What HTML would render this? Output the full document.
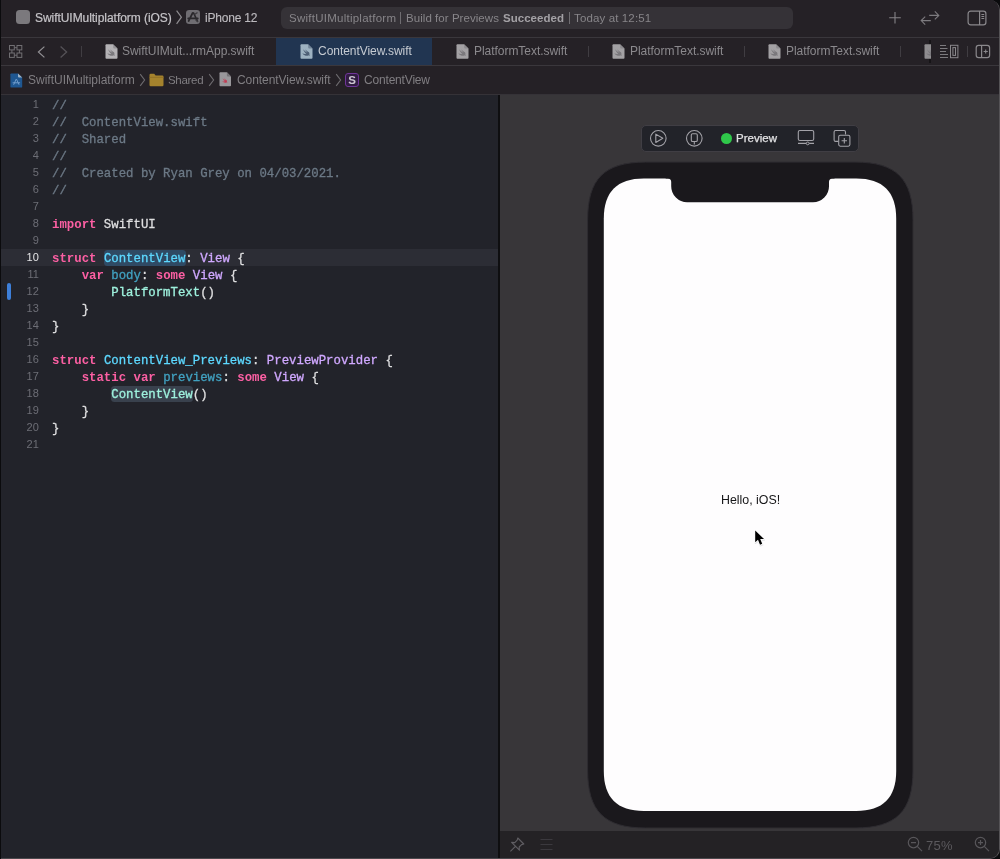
<!DOCTYPE html>
<html>
<head>
<meta charset="utf-8">
<title>Xcode</title>
<style>
html,body{margin:0;padding:0;}
body{width:1000px;height:859px;overflow:hidden;background:#0b0b0d;font-family:"Liberation Sans",sans-serif;position:relative;}
#win{position:absolute;left:1px;top:0;width:999px;height:859px;box-sizing:border-box;background:#252126;border-radius:0 10px 10px 0;border-right:1px solid #555356;border-bottom:1px solid #4b494d;overflow:hidden;}
.abs{position:absolute;}
.t,.cl,.ln{will-change:transform;}
.t{position:absolute;white-space:pre;line-height:16px;height:16px;font-size:12px;}
/* title bar */
#titlebar{position:absolute;left:0;top:0;width:998px;height:37px;background:#252126;}
.hline{position:absolute;left:0;width:998px;height:1px;background:#3a373c;}
#status{position:absolute;left:280px;top:7px;width:512px;height:22px;border-radius:6px;background:#353237;}
/* tabs */
#tabbar{position:absolute;left:0;top:38px;width:998px;height:27px;background:#252126;}
#activetab{position:absolute;left:275px;top:38px;width:156px;height:27px;background:#213551;}
.vdiv{position:absolute;width:1px;top:46px;height:11px;background:#403d42;}
/* breadcrumb */
#crumbs{position:absolute;left:0;top:66px;width:998px;height:28px;background:#252126;}
/* editor */
#editor{position:absolute;left:0;top:95px;width:497px;height:763px;background:#22232a;}
#curline{position:absolute;left:0;top:154px;width:497px;height:17px;background:#2c2d35;}
#divider{position:absolute;left:497px;top:95px;width:2px;height:763px;background:#0e0e10;}
#preview{position:absolute;left:499px;top:95px;width:499px;height:736px;background:#383639;}
#pbar{position:absolute;left:499px;top:831px;width:499px;height:27px;background:#242225;}
.ln{position:absolute;left:0;width:37.8px;margin-top:0px;text-align:right;font-family:"Liberation Sans",sans-serif;font-size:11px;line-height:17px;height:17px;color:#6d6e76;}
.cl{position:absolute;left:51px;margin-top:2px;-webkit-text-stroke:0.3px;white-space:pre;font-family:"Liberation Mono",monospace;font-size:12.35px;line-height:17px;height:17px;color:#dfdfe0;}
#chg{position:absolute;left:6px;top:188px;width:4px;height:17px;border-radius:2px;background:#3d7fd9;}
.ln.cur{color:#e4e4e6}
.hlb{position:absolute;height:15.5px;border-radius:3.5px}
.c{color:#6c7986}.k{color:#fc5fa3;font-weight:bold;-webkit-text-stroke:0}.d{color:#5dd8ff}.o{color:#41a1c0}.p{color:#d0a8ff}.m{color:#9ef1dd}
</style>
</head>
<body>
<div id="win">
  <div id="titlebar"></div>
  <div class="hline" style="top:37px"></div>
  <div id="tabbar"></div>
  <div class="hline" style="top:65px"></div>
  <div id="crumbs"></div>
  <div class="hline" style="top:94px;background:#353237"></div>
  <div id="status"></div>
  <div id="activetab"></div>
  <div class="abs" style="left:15px;top:10px;width:14px;height:14px;border-radius:3.5px;background:#7b797d"></div>
  <div class="t" id="t_title" style="left:34px;top:9.5px;color:#c6c4c8;-webkit-text-stroke:0.2px #c6c4c8;letter-spacing:-0.05px">SwiftUIMultiplatform (iOS)</div>
  <svg class="abs" style="left:174px;top:9px" width="8" height="17" viewBox="0 0 8 17"><path d="M1.6 1.6L6.4 8.2L1.6 14.8" fill="none" stroke="#8e8c90" stroke-width="1.2"/></svg>
  <svg class="abs" style="left:185px;top:10px" width="14" height="14" viewBox="0 0 14 14"><rect x="0" y="0" width="14" height="14" rx="3.2" fill="#6f6d72"/><path d="M2.6 11L6.6 3M7.6 3L11.4 11M2.2 8.4H11.8" stroke="#2a282c" stroke-width="1.7" fill="none" stroke-linecap="round"/><path d="M8.5 4.5L11.5 2.5M9.5 9.5L12 12" stroke="#3c3a3e" stroke-width="1.4" fill="none"/></svg>
  <div class="t" id="t_iphone" style="left:204px;top:9.5px;color:#bcbabe;-webkit-text-stroke:0.15px #bcbabe;letter-spacing:-0.2px">iPhone 12</div>
  <div class="t" id="t_st1" style="left:288px;top:10px;color:#878589;font-size:11.5px;letter-spacing:0.25px">SwiftUIMultiplatform</div>
  <div class="abs" style="left:399px;top:12px;width:1px;height:12px;background:#6f6d71"></div>
  <div class="t" id="t_st2" style="left:405px;top:10px;color:#878589;font-size:11.5px;letter-spacing:0.05px">Build for Previews</div>
  <div class="t" id="t_st3" style="left:502px;top:10px;color:#a3a1a5;font-size:11.5px;font-weight:bold;letter-spacing:0.03px">Succeeded</div>
  <div class="abs" style="left:568px;top:12px;width:1px;height:12px;background:#6f6d71"></div>
  <div class="t" id="t_st4" style="left:573px;top:10px;color:#878589;font-size:11.5px;letter-spacing:0.13px">Today at 12:51</div>
  <svg class="abs" style="left:887px;top:11px" width="14" height="14" viewBox="0 0 14 14"><path d="M7 1V12.6M1.2 6.8H12.8" stroke="#858387" stroke-width="1.1" fill="none"/></svg>
  <svg class="abs" style="left:919px;top:10px" width="21" height="16" viewBox="0 0 21 16"><path d="M9.2 5.4H18.8M14.8 1.4L18.8 5.4L14.8 9.4" stroke="#7d7b7f" stroke-width="1.1" fill="none"/><path d="M10.8 10.6H1.2M5.2 6.6L1.2 10.6L5.2 14.6" stroke="#7d7b7f" stroke-width="1.1" fill="none"/></svg>
  <svg class="abs" style="left:966px;top:10px" width="20" height="16" viewBox="0 0 20 16"><rect x="1.1" y="1.1" width="17.8" height="13.8" rx="2.6" fill="none" stroke="#8a888c" stroke-width="1.2"/><path d="M12.6 1.1V14.9" stroke="#8a888c" stroke-width="1.2"/><path d="M14.4 4.5H17.2M14.4 6.5H17.2M14.4 8.5H17.2" stroke="#8a888c" stroke-width="1"/></svg>
  <svg class="abs" style="left:7px;top:44px" width="15" height="15" viewBox="0 0 15 15"><g fill="none" stroke="#716f73" stroke-width="1"><rect x="1.5" y="1.5" width="4.8" height="4.4"/><rect x="9" y="1.5" width="4.8" height="4.4"/><rect x="1.5" y="9" width="4.8" height="4.4"/><rect x="9" y="9" width="4.8" height="4.4"/><path d="M6.3 3.7H9M6.3 11.2H9M3.9 5.9V9M11.4 5.9V9"/></g></svg>
  <svg class="abs" style="left:35px;top:45px" width="10" height="14" viewBox="0 0 10 14"><path d="M8.4 1.6L2.4 7L8.4 12.4" fill="none" stroke="#939195" stroke-width="1.2"/></svg>
  <svg class="abs" style="left:58px;top:45px" width="10" height="14" viewBox="0 0 10 14"><path d="M1.6 1.6L7.6 7L1.6 12.4" fill="none" stroke="#555257" stroke-width="1.3"/></svg>
  <div class="vdiv" style="left:80px"></div>
  <svg class="abs" style="left:104px;top:44px" width="13" height="15" viewBox="0 0 13 15"><path d="M0.5 1.2Q0.5 0.3 1.4 0.3H8.2L12.5 4.6V13.8Q12.5 14.7 11.6 14.7H1.4Q0.5 14.7 0.5 13.8Z" fill="#b4b2b5"/><path d="M8.2 0.3V3.6Q8.2 4.6 9.2 4.6H12.5Z" fill="#7a787c" opacity="0.55"/><path d="M3 5.2C4.4 6.8 5.8 7.9 7.4 8.8C6.4 7.6 5.6 6.4 5 5.2C6.4 6.6 7.8 7.7 9 8.3C9.6 9.2 9.5 10 9.3 10.5C9.8 11 10 11.6 9.9 12C9.5 11.4 9 11.2 8.5 11.4C7.4 12 5.9 12 4.6 11.3C3.6 10.8 2.8 10 2.4 9.2C3.6 10 5 10.3 6.2 9.8C4.9 8.7 3.8 7 3 5.2Z" fill="#7a787c"/></svg>
  <div class="t" id="t_tab1" style="left:121px;top:43px;color:#8b898d;letter-spacing:-0.04px">SwiftUIMult...rmApp.swift</div>
  <svg class="abs" style="left:299px;top:44px" width="13" height="15" viewBox="0 0 13 15"><path d="M0.5 1.2Q0.5 0.3 1.4 0.3H8.2L12.5 4.6V13.8Q12.5 14.7 11.6 14.7H1.4Q0.5 14.7 0.5 13.8Z" fill="#9eb2c1"/><path d="M8.2 0.3V3.6Q8.2 4.6 9.2 4.6H12.5Z" fill="#4e5f75" opacity="0.55"/><path d="M3 5.2C4.4 6.8 5.8 7.9 7.4 8.8C6.4 7.6 5.6 6.4 5 5.2C6.4 6.6 7.8 7.7 9 8.3C9.6 9.2 9.5 10 9.3 10.5C9.8 11 10 11.6 9.9 12C9.5 11.4 9 11.2 8.5 11.4C7.4 12 5.9 12 4.6 11.3C3.6 10.8 2.8 10 2.4 9.2C3.6 10 5 10.3 6.2 9.8C4.9 8.7 3.8 7 3 5.2Z" fill="#4e5f75"/></svg>
  <div class="t" id="t_tab2" style="left:317px;top:43px;color:#c6cbd2;letter-spacing:-0.04px">ContentView.swift</div>
  <svg class="abs" style="left:455px;top:44px" width="13" height="15" viewBox="0 0 13 15"><path d="M0.5 1.2Q0.5 0.3 1.4 0.3H8.2L12.5 4.6V13.8Q12.5 14.7 11.6 14.7H1.4Q0.5 14.7 0.5 13.8Z" fill="#a3a1a4"/><path d="M8.2 0.3V3.6Q8.2 4.6 9.2 4.6H12.5Z" fill="#7a787c" opacity="0.55"/><path d="M3 5.2C4.4 6.8 5.8 7.9 7.4 8.8C6.4 7.6 5.6 6.4 5 5.2C6.4 6.6 7.8 7.7 9 8.3C9.6 9.2 9.5 10 9.3 10.5C9.8 11 10 11.6 9.9 12C9.5 11.4 9 11.2 8.5 11.4C7.4 12 5.9 12 4.6 11.3C3.6 10.8 2.8 10 2.4 9.2C3.6 10 5 10.3 6.2 9.8C4.9 8.7 3.8 7 3 5.2Z" fill="#7a787c"/></svg>
  <div class="t" id="t_tab3" style="left:472.6px;top:43px;color:#8b898d;letter-spacing:-0.04px">PlatformText.swift</div>
  <svg class="abs" style="left:611px;top:44px" width="13" height="15" viewBox="0 0 13 15"><path d="M0.5 1.2Q0.5 0.3 1.4 0.3H8.2L12.5 4.6V13.8Q12.5 14.7 11.6 14.7H1.4Q0.5 14.7 0.5 13.8Z" fill="#a3a1a4"/><path d="M8.2 0.3V3.6Q8.2 4.6 9.2 4.6H12.5Z" fill="#7a787c" opacity="0.55"/><path d="M3 5.2C4.4 6.8 5.8 7.9 7.4 8.8C6.4 7.6 5.6 6.4 5 5.2C6.4 6.6 7.8 7.7 9 8.3C9.6 9.2 9.5 10 9.3 10.5C9.8 11 10 11.6 9.9 12C9.5 11.4 9 11.2 8.5 11.4C7.4 12 5.9 12 4.6 11.3C3.6 10.8 2.8 10 2.4 9.2C3.6 10 5 10.3 6.2 9.8C4.9 8.7 3.8 7 3 5.2Z" fill="#7a787c"/></svg>
  <div class="t" id="t_tab4" style="left:628.6px;top:43px;color:#8b898d;letter-spacing:-0.04px">PlatformText.swift</div>
  <svg class="abs" style="left:767px;top:44px" width="13" height="15" viewBox="0 0 13 15"><path d="M0.5 1.2Q0.5 0.3 1.4 0.3H8.2L12.5 4.6V13.8Q12.5 14.7 11.6 14.7H1.4Q0.5 14.7 0.5 13.8Z" fill="#a3a1a4"/><path d="M8.2 0.3V3.6Q8.2 4.6 9.2 4.6H12.5Z" fill="#7a787c" opacity="0.55"/><path d="M3 5.2C4.4 6.8 5.8 7.9 7.4 8.8C6.4 7.6 5.6 6.4 5 5.2C6.4 6.6 7.8 7.7 9 8.3C9.6 9.2 9.5 10 9.3 10.5C9.8 11 10 11.6 9.9 12C9.5 11.4 9 11.2 8.5 11.4C7.4 12 5.9 12 4.6 11.3C3.6 10.8 2.8 10 2.4 9.2C3.6 10 5 10.3 6.2 9.8C4.9 8.7 3.8 7 3 5.2Z" fill="#7a787c"/></svg>
  <div class="t" id="t_tab5" style="left:784.6px;top:43px;color:#8b898d;letter-spacing:-0.04px">PlatformText.swift</div>
  <div class="vdiv" style="left:587px"></div>
  <div class="vdiv" style="left:743px"></div>
  <div class="vdiv" style="left:899px"></div>
  <div class="vdiv" style="left:966px"></div>
  <div class="abs" style="left:928px;top:40px;width:2px;height:23px;background:#161417"></div>
  <div class="abs" style="left:923px;top:44px;width:7px;height:15px;overflow:hidden"><svg style="position:absolute;left:0;top:0" width="13" height="15" viewBox="0 0 13 15"><path d="M0.5 1.2Q0.5 0.3 1.4 0.3H8.2L12.5 4.6V13.8Q12.5 14.7 11.6 14.7H1.4Q0.5 14.7 0.5 13.8Z" fill="#8f8d90"/><path d="M8.2 0.3V3.6Q8.2 4.6 9.2 4.6H12.5Z" fill="#7a787c" opacity="0.55"/><path d="M3 5.2C4.4 6.8 5.8 7.9 7.4 8.8C6.4 7.6 5.6 6.4 5 5.2C6.4 6.6 7.8 7.7 9 8.3C9.6 9.2 9.5 10 9.3 10.5C9.8 11 10 11.6 9.9 12C9.5 11.4 9 11.2 8.5 11.4C7.4 12 5.9 12 4.6 11.3C3.6 10.8 2.8 10 2.4 9.2C3.6 10 5 10.3 6.2 9.8C4.9 8.7 3.8 7 3 5.2Z" fill="#7a787c"/></svg></div>
  <svg class="abs" style="left:938px;top:44px" width="20" height="15" viewBox="0 0 20 15"><path d="M1 1.5H7M1 4.5H8.5M1 7.5H7M1 10.5H9M1 13.5H9" stroke="#7c7a7e" stroke-width="1" fill="none"/><rect x="11.5" y="1.3" width="7.4" height="12.4" fill="none" stroke="#8a888c" stroke-width="1"/><rect x="13.9" y="3.6" width="2.6" height="7.8" fill="none" stroke="#8a888c" stroke-width="1"/></svg>
  <svg class="abs" style="left:974px;top:44px" width="16" height="15" viewBox="0 0 16 15"><rect x="1.2" y="1.3" width="13.4" height="12.4" rx="2.4" fill="none" stroke="#8a888c" stroke-width="1.2"/><path d="M6.6 1.3V13.7" stroke="#8a888c" stroke-width="1.2"/><path d="M10.7 5.4V9.6M8.6 7.5H12.8" stroke="#8a888c" stroke-width="1.1"/></svg>
  <svg class="abs" style="left:9px;top:72.5px" width="13" height="15" viewBox="0 0 13 15"><path d="M0.4 1.3Q0.4 0.4 1.3 0.4H8L12.2 4.6V13.7Q12.2 14.6 11.3 14.6H1.3Q0.4 14.6 0.4 13.7Z" fill="#1f5791"/><path d="M8 0.4V3.6Q8 4.6 9 4.6H12.2Z" fill="#9fb4c8"/><path d="M3.8 11.4L6.1 6.4M6.6 6.4L8.9 11.4M3 9.8H9.7" stroke="#6f9ccb" stroke-width="1" fill="none" stroke-linecap="round"/></svg>
  <div class="t" id="t_bc1" style="left:27px;top:72px;color:#807e82">SwiftUIMultiplatform</div>
  <svg class="abs" style="left:138px;top:73px" width="7" height="14" viewBox="0 0 7 14"><path d="M1.2 1.2L5.6 7L1.2 12.8" fill="none" stroke="#6d6b6f" stroke-width="1.1"/></svg>
  <svg class="abs" style="left:147.5px;top:73.3px" width="15" height="14" viewBox="0 0 15 14"><path d="M0.5 2Q0.5 0.8 1.7 0.8H5.2L6.6 2.4H13.3Q14.5 2.4 14.5 3.6V12Q14.5 13.2 13.3 13.2H1.7Q0.5 13.2 0.5 12Z" fill="#a5832d"/><path d="M0.5 4.4H14.5" stroke="#8f6f24" stroke-width="0.8"/></svg>
  <div class="t" id="t_bc2" style="left:167.4px;top:72px;color:#807e82;font-size:11.5px;letter-spacing:-0.3px">Shared</div>
  <svg class="abs" style="left:207px;top:73px" width="7" height="14" viewBox="0 0 7 14"><path d="M1.2 1.2L5.6 7L1.2 12.8" fill="none" stroke="#6d6b6f" stroke-width="1.1"/></svg>
  <svg class="abs" style="left:217.6px;top:72.4px" width="12.5" height="14.5" viewBox="0 0 13 15"><path d="M0.5 1.2Q0.5 0.3 1.4 0.3H8.2L12.5 4.6V13.8Q12.5 14.7 11.6 14.7H1.4Q0.5 14.7 0.5 13.8Z" fill="#99979b"/><path d="M8.2 0.3V3.6Q8.2 4.6 9.2 4.6H12.5Z" fill="#757377"/><g transform="translate(1.5 2.6) scale(0.72)"><path d="M3 5.2C4.4 6.8 5.8 7.9 7.4 8.8C6.4 7.6 5.6 6.4 5 5.2C6.4 6.6 7.8 7.7 9 8.3C9.6 9.2 9.5 10 9.3 10.5C9.8 11 10 11.6 9.9 12C9.5 11.4 9 11.2 8.5 11.4C7.4 12 5.9 12 4.6 11.3C3.6 10.8 2.8 10 2.4 9.2C3.6 10 5 10.3 6.2 9.8C4.9 8.7 3.8 7 3 5.2Z" fill="#c23a52"/></g></svg>
  <div class="t" id="t_bc3" style="left:235.9px;top:72px;color:#807e82;letter-spacing:-0.06px">ContentView.swift</div>
  <svg class="abs" style="left:334px;top:73px" width="7" height="14" viewBox="0 0 7 14"><path d="M1.2 1.2L5.6 7L1.2 12.8" fill="none" stroke="#6d6b6f" stroke-width="1.1"/></svg>
  <div class="abs" style="left:344px;top:73px;width:12px;height:12px;border:1px solid #70359a;border-radius:3px;background:#311c42"></div>
  <div class="t" style="left:344px;top:72px;width:14px;text-align:center;color:#cdc8d2;font-size:11.5px;font-weight:bold;line-height:16px">S</div>
  <div class="t" id="t_bc4" style="left:363px;top:72px;color:#807e82;letter-spacing:-0.18px">ContentView</div>
  <div id="editor">
    <div id="curline"></div>
    <div id="chg"></div>
    <div class="hlb" style="left:102.5px;top:155px;width:82.6px;background:#2f4a64"></div>
    <div class="hlb" style="left:109.9px;top:291px;width:82.6px;background:#39414d"></div>
    <div class="ln" style="top:1px">1</div><div class="cl" style="top:1px"><span class="c">//</span></div>
    <div class="ln" style="top:18px">2</div><div class="cl" style="top:18px"><span class="c">//  ContentView.swift</span></div>
    <div class="ln" style="top:35px">3</div><div class="cl" style="top:35px"><span class="c">//  Shared</span></div>
    <div class="ln" style="top:52px">4</div><div class="cl" style="top:52px"><span class="c">//</span></div>
    <div class="ln" style="top:69px">5</div><div class="cl" style="top:69px"><span class="c">//  Created by Ryan Grey on 04/03/2021.</span></div>
    <div class="ln" style="top:86px">6</div><div class="cl" style="top:86px"><span class="c">//</span></div>
    <div class="ln" style="top:103px">7</div><div class="cl" style="top:103px"></div>
    <div class="ln" style="top:120px">8</div><div class="cl" style="top:120px"><span class="k">import</span> SwiftUI</div>
    <div class="ln" style="top:137px">9</div><div class="cl" style="top:137px"></div>
    <div class="ln cur" style="top:154px">10</div><div class="cl" style="top:154px"><span class="k">struct</span> <span class="d">ContentView</span>: <span class="p">View</span> {</div>
    <div class="ln" style="top:171px">11</div><div class="cl" style="top:171px">    <span class="k">var</span> <span class="o">body</span>: <span class="k">some</span> <span class="p">View</span> {</div>
    <div class="ln" style="top:188px">12</div><div class="cl" style="top:188px">        <span class="m">PlatformText</span>()</div>
    <div class="ln" style="top:205px">13</div><div class="cl" style="top:205px">    }</div>
    <div class="ln" style="top:222px">14</div><div class="cl" style="top:222px">}</div>
    <div class="ln" style="top:239px">15</div><div class="cl" style="top:239px"></div>
    <div class="ln" style="top:256px">16</div><div class="cl" style="top:256px"><span class="k">struct</span> <span class="d">ContentView_Previews</span>: <span class="p">PreviewProvider</span> {</div>
    <div class="ln" style="top:273px">17</div><div class="cl" style="top:273px">    <span class="k">static</span> <span class="k">var</span> <span class="o">previews</span>: <span class="k">some</span> <span class="p">View</span> {</div>
    <div class="ln" style="top:290px">18</div><div class="cl" style="top:290px">        <span class="m">ContentView</span>()</div>
    <div class="ln" style="top:307px">19</div><div class="cl" style="top:307px">    }</div>
    <div class="ln" style="top:324px">20</div><div class="cl" style="top:324px">}</div>
    <div class="ln" style="top:341px">21</div><div class="cl" style="top:341px"></div>
  </div>
  <div id="divider"></div>
  <div id="preview"></div>
  <div id="pbar"></div>
  <div class="abs" id="ptool" style="left:640px;top:125px;width:216px;height:25px;border:1px solid #403e44;border-radius:5px;background:#222329"></div>
  <svg class="abs" style="left:648px;top:129px" width="19" height="19" viewBox="0 0 19 19"><circle cx="9.3" cy="9.3" r="7.8" fill="none" stroke="#a3a2a8" stroke-width="1.1"/><path d="M6.8 5.1V13.5L13.8 9.3Z" fill="none" stroke="#a3a2a8" stroke-width="1.1" stroke-linejoin="round"/></svg>
  <svg class="abs" style="left:684px;top:129px" width="19" height="19" viewBox="0 0 19 19"><circle cx="9.3" cy="9.3" r="7.8" fill="none" stroke="#a3a2a8" stroke-width="1.1"/><rect x="6.3" y="4.7" width="6" height="7.8" rx="1.3" fill="none" stroke="#a3a2a8" stroke-width="1.1"/><path d="M9.3 12.5V15.6" stroke="#a3a2a8" stroke-width="1.1"/></svg>
  <div class="abs" style="left:719.5px;top:132.6px;width:11.6px;height:11.6px;border-radius:50%;background:#2fc84a"></div>
  <div class="t" id="t_prev" style="left:734.6px;top:130px;color:#e2e2e4;-webkit-text-stroke:0.25px #e2e2e4;font-size:11.5px;letter-spacing:0.02px">Preview</div>
  <svg class="abs" style="left:795px;top:128px" width="20" height="18" viewBox="0 0 20 18"><rect x="2.3" y="2.5" width="15.4" height="10" rx="1.6" fill="none" stroke="#a3a2a8" stroke-width="1.1"/><path d="M2 15.4H10.2M13.2 15.4H18" stroke="#a3a2a8" stroke-width="1.1"/><circle cx="11.7" cy="15.4" r="1.4" fill="none" stroke="#a3a2a8" stroke-width="1"/></svg>
  <svg class="abs" style="left:831px;top:128px" width="20" height="20" viewBox="0 0 20 20"><path d="M6.4 13.4H3.6Q2.1 13.4 2.1 11.9V4Q2.1 2.5 3.6 2.5H12Q13.5 2.5 13.5 4V6.6" fill="none" stroke="#a3a2a8" stroke-width="1.1"/><rect x="6.7" y="7.2" width="11.2" height="11" rx="1.6" fill="none" stroke="#a3a2a8" stroke-width="1.1"/><path d="M12.3 10V15.4M9.6 12.7H15" stroke="#a3a2a8" stroke-width="1.1"/></svg>
  <svg class="abs" id="phone" style="left:580px;top:155px" width="340" height="680" viewBox="0 0 340 680"><path d="M64.6 7.1H274C315.33 7.1 332 23.77 332 65.1V615C332 656.33 315.33 673 274 673H64.6C23.27 673 6.6 656.33 6.6 615V65.1C6.6 23.77 23.27 7.1 64.6 7.1Z" fill="#1a181c" stroke="#2e2c31" stroke-width="1"/><path d="M62.8 23.4H275.2C301.88 23.4 315.2 36.72 315.2 63.4V616C315.2 642.68 301.88 656 275.2 656H62.8C36.12 656 22.8 642.68 22.8 616V63.4C22.8 36.72 36.12 23.4 62.8 23.4Z" fill="#fefdfe"/><path d="M84.7 22.4H253.5V23.4H251.5A3.5 3.5 0 0 0 248 26.9V31.3A16 16 0 0 1 232 47.3H106.2A16 16 0 0 1 90.2 31.3V26.9A3.5 3.5 0 0 0 86.7 23.4H84.7Z" fill="#1a181c"/></svg>
  <div class="t" id="t_hello" style="left:719.5px;top:491.5px;color:#161618;font-size:12.4px;letter-spacing:0px">Hello, iOS!</div>
  <svg class="abs" style="left:750px;top:527px" width="20" height="24" viewBox="0 0 20 24"><path d="M4.2 3.6V15.2L7 12.7L9 17.7L11.2 16.8L9.2 12L13 11.9Z" transform="translate(0.3 1)" fill="#c8c8cc" stroke="#d8d8dc" stroke-width="1.6" stroke-linejoin="round" opacity="0.7"/><path d="M4.2 3.6V15.2L7 12.7L9 17.7L11.2 16.8L9.2 12L13 11.9Z" fill="#fff" stroke="#fff" stroke-width="1.6" stroke-linejoin="round"/><path d="M4.2 3.6V15.2L7 12.7L9 17.7L11.2 16.8L9.2 12L13 11.9Z" fill="#000"/></svg>
  <svg class="abs" style="left:507px;top:836px" width="18" height="18" viewBox="0 0 18 18"><path d="M9.8 2L15.8 8L13.6 8.6L11.2 11L11.4 14.2L3.6 6.4L6.8 6.6L9.2 4.2Z M7.4 10.4L2.4 15.4" fill="none" stroke="#605e63" stroke-width="1.1" stroke-linejoin="round"/></svg>
  <svg class="abs" style="left:538px;top:836px" width="16" height="16" viewBox="0 0 16 16"><path d="M1.5 3.5H13.5M1.5 8.5H13.5M1.5 13.5H13.5" stroke="#3b393e" stroke-width="1.1"/></svg>
  <svg class="abs" style="left:905px;top:835px" width="18" height="18" viewBox="0 0 18 18"><circle cx="7.5" cy="7.6" r="5.2" fill="none" stroke="#58565a" stroke-width="1.2"/><path d="M11.3 11.4L16 16.2M5 7.6H10" stroke="#58565a" stroke-width="1.2"/></svg>
  <div class="t" id="t_zoom" style="left:924.9px;top:838px;color:#5b595d;font-size:13px;letter-spacing:0.3px">75%</div>
  <svg class="abs" style="left:972px;top:835px" width="18" height="18" viewBox="0 0 18 18"><circle cx="7.5" cy="7.6" r="5.2" fill="none" stroke="#58565a" stroke-width="1.2"/><path d="M11.3 11.4L16 16.2M5 7.6H10M7.5 5.1V10.1" stroke="#58565a" stroke-width="1.2"/></svg>
</div>
</body>
</html>
